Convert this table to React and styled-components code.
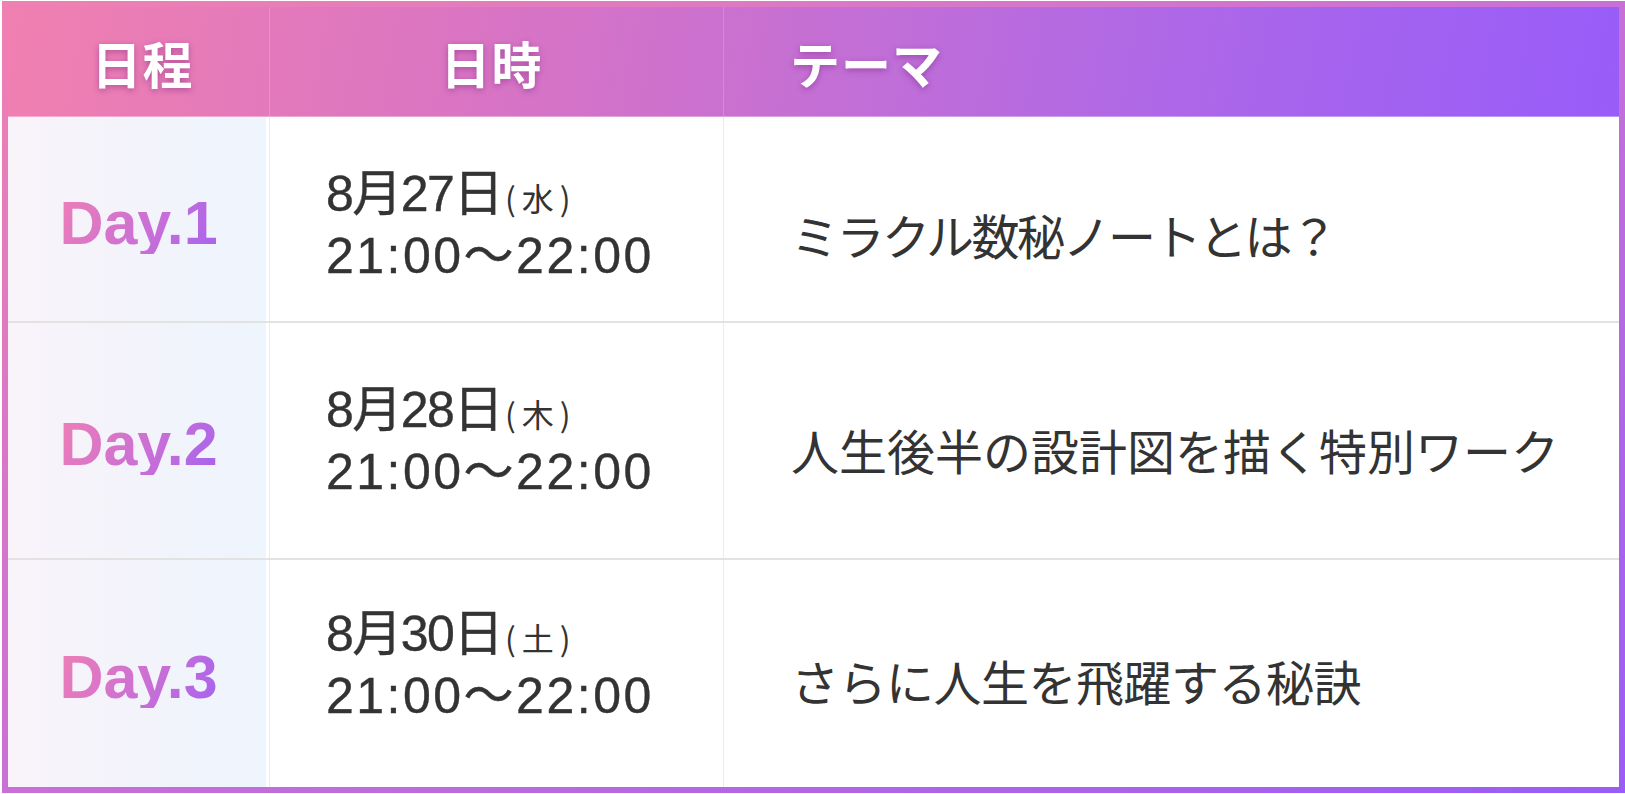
import React from "react";
import styled, { createGlobalStyle } from "styled-components";

const GlobalStyle = createGlobalStyle`
  html, body { margin: 0; padding: 0; background: #ffffff; }
  body { font-family: "Noto Sans CJK JP", "Noto Sans", sans-serif; color: #333; }
`;

const Frame = styled.div`
  box-sizing: border-box;
  margin: 1px 0 0 2px;
  width: 1623px;
  height: 792px;
  border: 6px solid transparent;
  background:
    linear-gradient(#fff, #fff) padding-box,
    linear-gradient(to bottom right, #f080b2 0%, #c870d6 50%, #9b5cf6 100%) border-box;
  display: flex;
  flex-direction: column;
`;

const cols = "262px 454px 1fr";

const HeaderRow = styled.div`
  display: grid;
  grid-template-columns: ${cols};
  height: 110px;
  box-sizing: border-box;
  border-bottom: 1px solid rgba(255, 255, 255, 0.35);
  background: linear-gradient(100deg, #f080b0 0%, #d974c4 30%, #c06ed8 55%, #a865ec 78%, #985cf8 100%);
`;

const HeadCell = styled.div`
  display: flex;
  align-items: center;
  justify-content: ${(p) => (p.$left ? "flex-start" : "center")};
  padding-left: ${(p) => p.$pl || 0}px;
  padding-right: ${(p) => p.$pr || 0}px;
  box-sizing: border-box;
  border-right: ${(p) => (p.$last ? "none" : "1px solid rgba(255,255,255,0.18)")};
  color: #fff;
  font-weight: 700;
  font-size: 50px;
  letter-spacing: 1px;
  text-shadow: 0 2px 6px rgba(110, 30, 120, 0.45);
`;

const BodyRow = styled.div`
  display: grid;
  grid-template-columns: ${cols};
  height: ${(p) => (p.$h ? `${p.$h}px` : "auto")};
  flex: ${(p) => (p.$h ? "none" : "1")};
  box-sizing: border-box;
  border-top: ${(p) => (p.$first ? "none" : "2px solid #e2e2e2")};
`;

const DayCell = styled.div`
  display: flex;
  align-items: center;
  justify-content: center;
  box-sizing: border-box;
  border-right: 1px solid #ececec;
  background: linear-gradient(90deg, #faf3fa 0%, #f3f3fb 50%, #eef5fd 100%) no-repeat;
  background-size: calc(100% - 3px) 100%;
`;

const DayLabel = styled.span`
  font-family: "Liberation Sans", Arial, sans-serif;
  font-weight: 700;
  font-size: 61px;
  line-height: 1;
  padding-top: 8px;
  background: linear-gradient(120deg, #f080b4 0%, #cc70d4 55%, #a663ee 100%);
  -webkit-background-clip: text;
  background-clip: text;
  color: transparent;
`;

const shift = (p) => `
  padding-top: ${Math.max(0, 2 * (p.$dy || 0))}px;
  padding-bottom: ${Math.max(0, -2 * (p.$dy || 0))}px;
`;

const DateCell = styled.div`
  display: flex;
  flex-direction: column;
  justify-content: center;
  padding-left: 56px;
  ${shift}
  box-sizing: border-box;
  border-right: 1px solid #ececec;
  font-family: "Liberation Sans", "Noto Sans CJK JP", sans-serif;
  font-size: 50px;
  line-height: 59px;
  color: #333;
  -webkit-text-stroke: 0.4px #333;
`;

const DateLine = styled.div`
  letter-spacing: ${(p) => p.$ls}px;
  white-space: nowrap;
`;

const Week = styled.span`
  font-family: "Noto Sans CJK JP", sans-serif;
  font-size: 32px;
  margin-left: 3px;
  letter-spacing: 6px;
  -webkit-text-stroke: 0;
`;

const ThemeCell = styled.div`
  display: flex;
  align-items: center;
  padding-left: 67px;
  ${shift}
  font-size: 48px;
  letter-spacing: ${(p) => p.$ls || 0}px;
  color: #333;
`;

const rows = [
  { day: "Day.1", date: "8月27日", week: "水", theme: "ミラクル数秘ノートとは？", h: 204, dd: 6, td: 15, ls: -2.5 },
  { day: "Day.2", date: "8月28日", week: "木", theme: "人生後半の設計図を描く特別ワーク", h: 237, dd: 1, td: 8, ls: 0 },
  { day: "Day.3", date: "8月30日", week: "土", theme: "さらに人生を飛躍する秘訣", dd: -8, td: 6, ls: -0.5 },
];

export default function App() {
  return (
    <>
      <GlobalStyle />
      <Frame>
        <HeaderRow>
          <HeadCell $pl={8}>日程</HeadCell>
          <HeadCell $pr={10}>日時</HeadCell>
          <HeadCell $left $pl={66} $last>テーマ</HeadCell>
        </HeaderRow>
        {rows.map((r, i) => (
          <BodyRow key={r.day} $h={r.h} $first={i === 0}>
            <DayCell>
              <DayLabel>{r.day}</DayLabel>
            </DayCell>
            <DateCell $dy={r.dd}>
              <DateLine $ls={-1.5}>
                {r.date}
                <Week>({r.week})</Week>
              </DateLine>
              <DateLine $ls={2.5}>21:00〜22:00</DateLine>
            </DateCell>
            <ThemeCell $dy={r.td} $ls={r.ls}>{r.theme}</ThemeCell>
          </BodyRow>
        ))}
      </Frame>
    </>
  );
}
